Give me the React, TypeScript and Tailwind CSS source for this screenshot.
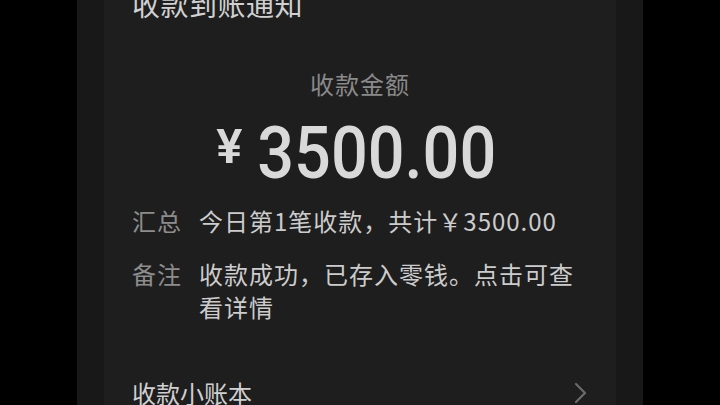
const CJK = "font-['Noto_Sans_CJK_SC','Noto_Sans',sans-serif]";

type Row = { label: string; value: string };

const ROWS: Row[] = [
  { label: '汇总', value: '今日第1笔收款，共计￥3500.00' },
  { label: '备注', value: '收款成功，已存入零钱。点击可查看详情' },
];

const Chevron = () => (
  <svg width="14" height="22" viewBox="0 0 14 22" fill="none" aria-hidden="true">
    <path d="M2 2l9 9-9 9" stroke="#6b6b6b" strokeWidth="2.2" strokeLinecap="round" strokeLinejoin="round" />
  </svg>
);

export default function App() {
  return (
    <div className={`flex h-[405px] w-[720px] justify-center overflow-hidden bg-black ${CJK}`}>
      <div className="h-full w-[566px] bg-[#181818] px-[27px]">
        <div className="flex h-full flex-col bg-[#1e1e1e] px-[28px]">
          <h1 className="mt-[-14px] text-[28px] leading-[36px] tracking-[0.5px] text-[#d0d0d0]">
            收款到账通知
          </h1>

          <p className="mt-[46px] text-center text-[24px] leading-[32px] tracking-[1px] text-[#8a8a8a]">
            收款金额
          </p>

          <div className="mt-[18px] flex h-[72px] items-start justify-center pl-[6px] font-['Roboto',sans-serif] text-[#d9d9d9]">
            <span className="mt-[1px] text-[49px] font-semibold leading-[56px]">¥</span>
            <span className="ml-[2px] inline-block scale-x-[0.9] text-[72px] font-medium leading-[72px]">
              3500.00
            </span>
          </div>

          <div className="mt-[14px] flex flex-col gap-[20px]">
            {ROWS.map((row) => (
              <div key={row.label} className="flex text-[24px] leading-[33px] tracking-[1px]">
                <span className="w-[67px] shrink-0 text-[#8d8d8d]">{row.label}</span>
                <span className="text-[#cccccc]">{row.value}</span>
              </div>
            ))}
          </div>

          <div className="mt-[38px] h-[2px] bg-[#272727]" />

          <div className="mt-[14px] flex items-center justify-between">
            <span className="text-[24px] leading-[36px] text-[#d0d0d0]">收款小账本</span>
            <Chevron />
          </div>
        </div>
      </div>
    </div>
  );
}
